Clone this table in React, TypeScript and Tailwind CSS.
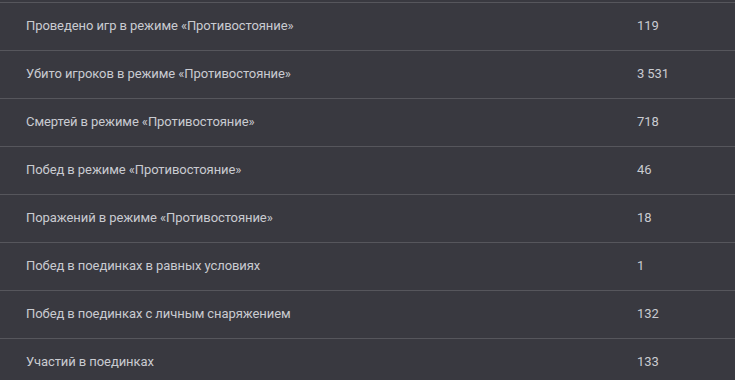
import React from "react";

const rows: [string, string][] = [
  ["Проведено игр в режиме «Противостояние»", "119"],
  ["Убито игроков в режиме «Противостояние»", "3 531"],
  ["Смертей в режиме «Противостояние»", "718"],
  ["Побед в режиме «Противостояние»", "46"],
  ["Поражений в режиме «Противостояние»", "18"],
  ["Побед в поединках в равных условиях", "1"],
  ["Побед в поединках с личным снаряжением", "132"],
  ["Участий в поединках", "133"],
];

export default function App() {
  return (
    <div
      className="w-[735px] h-[380px] overflow-hidden bg-[#393940] pt-[2px] text-[13px] tracking-[-0.08px] text-[#c9cbd1]"
      style={{ fontFamily: "Roboto, 'Noto Sans', sans-serif" }}
    >
      {rows.map(([label, value]) => (
        <div
          key={label}
          className="flex h-[48px] shrink-0 items-center border-t border-[#56565c] pb-[2px]"
        >
          <div className="w-[637px] pl-[26px]">{label}</div>
          <div>{value}</div>
        </div>
      ))}
    </div>
  );
}
